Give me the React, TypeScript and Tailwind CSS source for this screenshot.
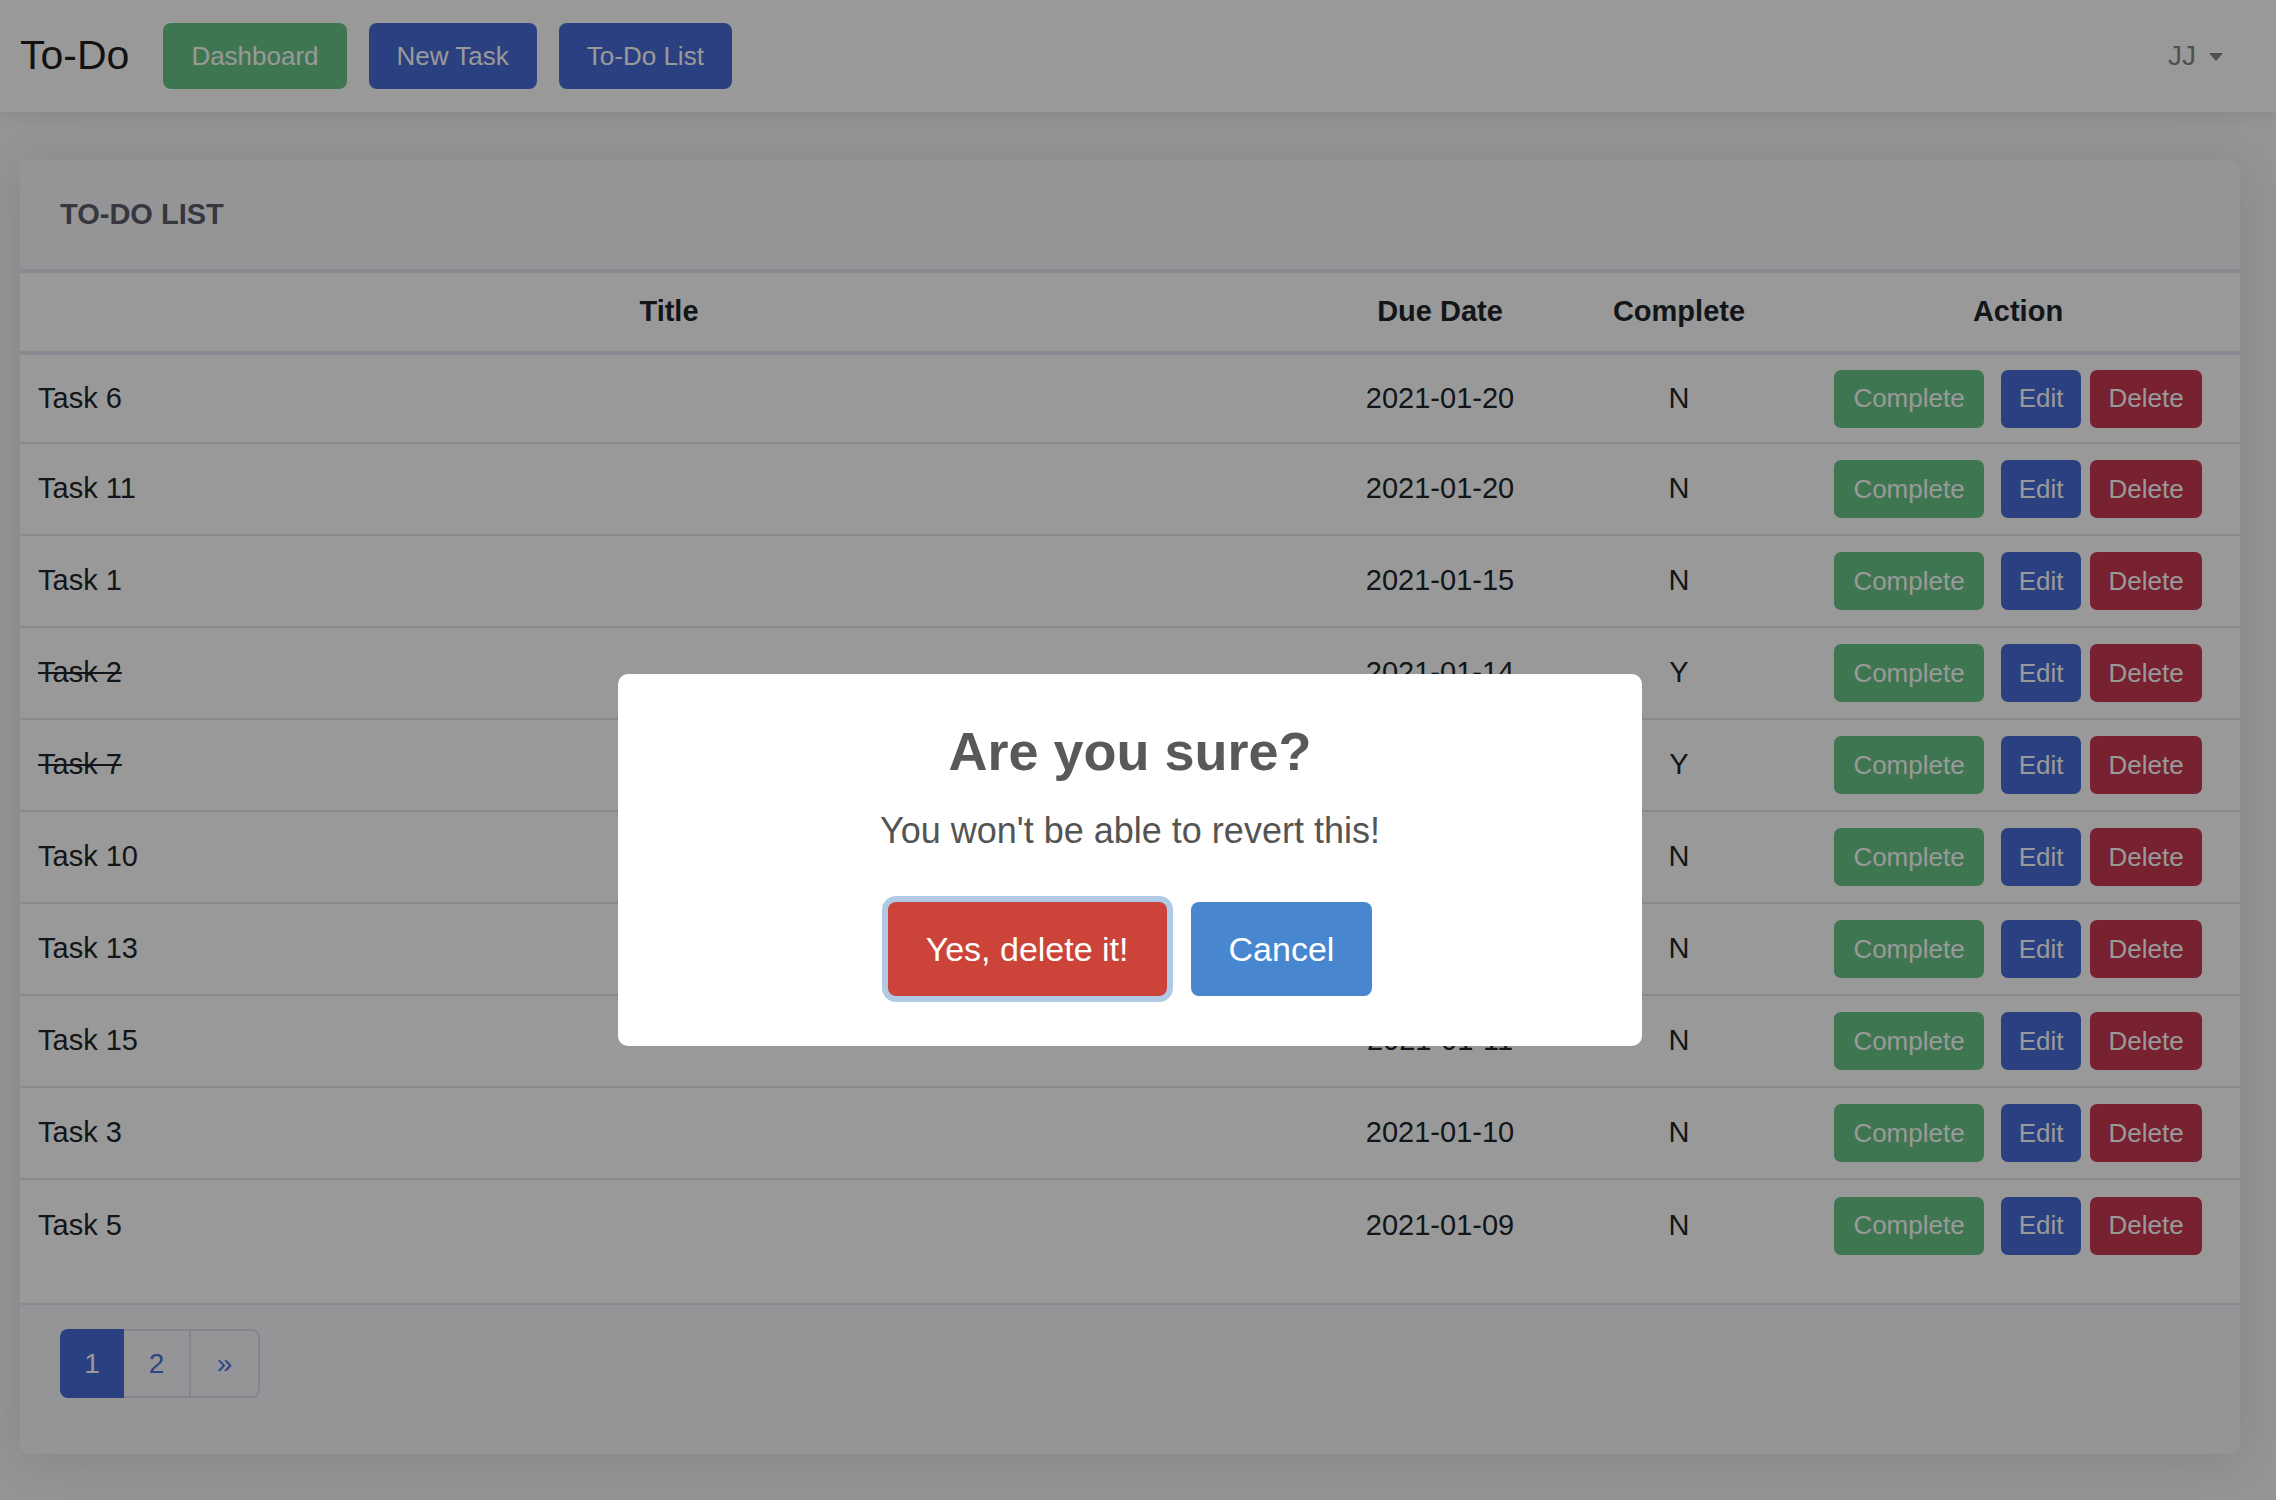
import React from 'react'

type Task = { title: string; due: string; done: boolean }

const tasks: Task[] = [
  { title: 'Task 6', due: '2021-01-20', done: false },
  { title: 'Task 11', due: '2021-01-20', done: false },
  { title: 'Task 1', due: '2021-01-15', done: false },
  { title: 'Task 2', due: '2021-01-14', done: true },
  { title: 'Task 7', due: '2021-01-13', done: true },
  { title: 'Task 10', due: '2021-01-12', done: false },
  { title: 'Task 13', due: '2021-01-12', done: false },
  { title: 'Task 15', due: '2021-01-11', done: false },
  { title: 'Task 3', due: '2021-01-10', done: false },
  { title: 'Task 5', due: '2021-01-09', done: false },
]

function Navbar() {
  return (
    <nav className="h-[112px] bg-white shadow-[0_4px_16px_rgba(58,59,69,0.12)] flex items-center pl-[20px] pr-[53px] relative z-10">
      <span className="text-[41px] text-black/90 mr-[34px]">To-Do</span>
      <div className="flex gap-[22px]">
        <button className="h-[66px] px-[28px] rounded-[8px] bg-[#69c589] text-white text-[26px]">
          Dashboard
        </button>
        <button className="h-[66px] px-[28px] rounded-[8px] bg-[#486bd5] text-white text-[26px]">
          New Task
        </button>
        <button className="h-[66px] px-[28px] rounded-[8px] bg-[#486bd5] text-white text-[26px]">
          To-Do List
        </button>
      </div>
      <div className="ml-auto flex items-center text-[28px] text-[#858585]">
        JJ
        <span className="ml-[13px] mt-[2px] w-0 h-0 border-x-[7.5px] border-x-transparent border-t-[8px] border-t-[#858585]" />
      </div>
    </nav>
  )
}

function TodoCard() {
  return (
    <div className="bg-white rounded-[10px] overflow-hidden shadow-[0_6px_56px_0_rgba(58,59,69,0.15)]">
      <div className="h-[111px] px-[40px] flex items-center bg-[#f8f9fc] border-b-2 border-[#e3e6f0]">
        <h6 className="text-[29px] font-bold uppercase text-[#5a5c69]">To-Do List</h6>
      </div>
      <table className="w-full table-fixed border-collapse text-[#212529] mb-[32px]">
        <colgroup>
          <col className="w-[1298px]" />
          <col className="w-[244px]" />
          <col className="w-[234px]" />
          <col className="w-[444px]" />
        </colgroup>
        <thead>
          <tr className="h-[81px] text-[29px] font-bold">
            <th className="border-t-2 border-b-4 border-[#e3e6f0]">Title</th>
            <th className="border-t-2 border-b-4 border-[#e3e6f0]">Due Date</th>
            <th className="border-t-2 border-b-4 border-[#e3e6f0]">Complete</th>
            <th className="border-t-2 border-b-4 border-[#e3e6f0]">Action</th>
          </tr>
        </thead>
        <tbody className="text-[29px]">
          {tasks.map((t, i) => (
            <tr
              key={t.title}
              className={i > 0 ? 'h-[92px] border-t-2 border-[#e3e6f0]' : 'h-[90px]'}
            >
              <td className={t.done ? 'pl-[18px] line-through' : 'pl-[18px]'}>{t.title}</td>
              <td className="text-center">{t.due}</td>
              <td className="text-center">{t.done ? 'Y' : 'N'}</td>
              <td>
                <div className="flex justify-center text-[26px] text-white">
                  <button className="h-[58px] px-[19px] rounded-[7px] bg-[#69c589]">Complete</button>
                  <button className="h-[58px] px-[18px] rounded-[7px] bg-[#486bd5] ml-[17px]">Edit</button>
                  <button className="h-[58px] px-[18px] rounded-[7px] bg-[#c83750] ml-[9px]">Delete</button>
                </div>
              </td>
            </tr>
          ))}
        </tbody>
      </table>
      <div className="border-t-2 border-[#e3e6f0] bg-[#f8f9fc] px-[40px] pt-[24px] pb-[56px]">
        <div className="flex h-[69px] w-fit text-[28px]">
          <span className="w-[64px] flex items-center justify-center rounded-l-[8px] bg-[#486bd5] text-white">1</span>
          <span className="w-[67px] flex items-center justify-center border-2 border-l-0 border-[#dddfeb] text-[#4e73df]">2</span>
          <span className="w-[69px] flex items-center justify-center border-2 border-l-0 border-[#dddfeb] rounded-r-[8px] text-[#4e73df]">»</span>
        </div>
      </div>
    </div>
  )
}

function ConfirmDialog() {
  return (
    <div className="fixed inset-0 z-50 bg-black/40 flex items-center justify-center pt-[220px] pr-[16px]">
      <div className="w-[1024px] bg-white rounded-[10px] pt-[45px] pb-[50px] flex flex-col items-center">
        <h2 className="text-[54px] leading-[64px] font-bold text-[#595959]">Are you sure?</h2>
        <p className="mt-[24px] text-[36px] leading-[48px] text-[#545454]">You won't be able to revert this!</p>
        <div className="mt-[47px] flex gap-[24px] text-[34px] text-white">
          <button className="h-[94px] px-[38px] rounded-[8px] bg-[#cc4439] shadow-[0_0_0_6px_rgba(100,150,200,0.5)]">
            Yes, delete it!
          </button>
          <button className="h-[94px] px-[38px] rounded-[8px] bg-[#4887d0]">Cancel</button>
        </div>
      </div>
    </div>
  )
}

export default function App() {
  return (
    <div className="min-h-screen bg-[#f8f9fc] font-['Liberation_Sans',Arial,sans-serif]">
      <Navbar />
      <div className="pl-[20px] pr-[36px] pt-[48px] pb-[40px]">
        <TodoCard />
      </div>
      <ConfirmDialog />
    </div>
  )
}
